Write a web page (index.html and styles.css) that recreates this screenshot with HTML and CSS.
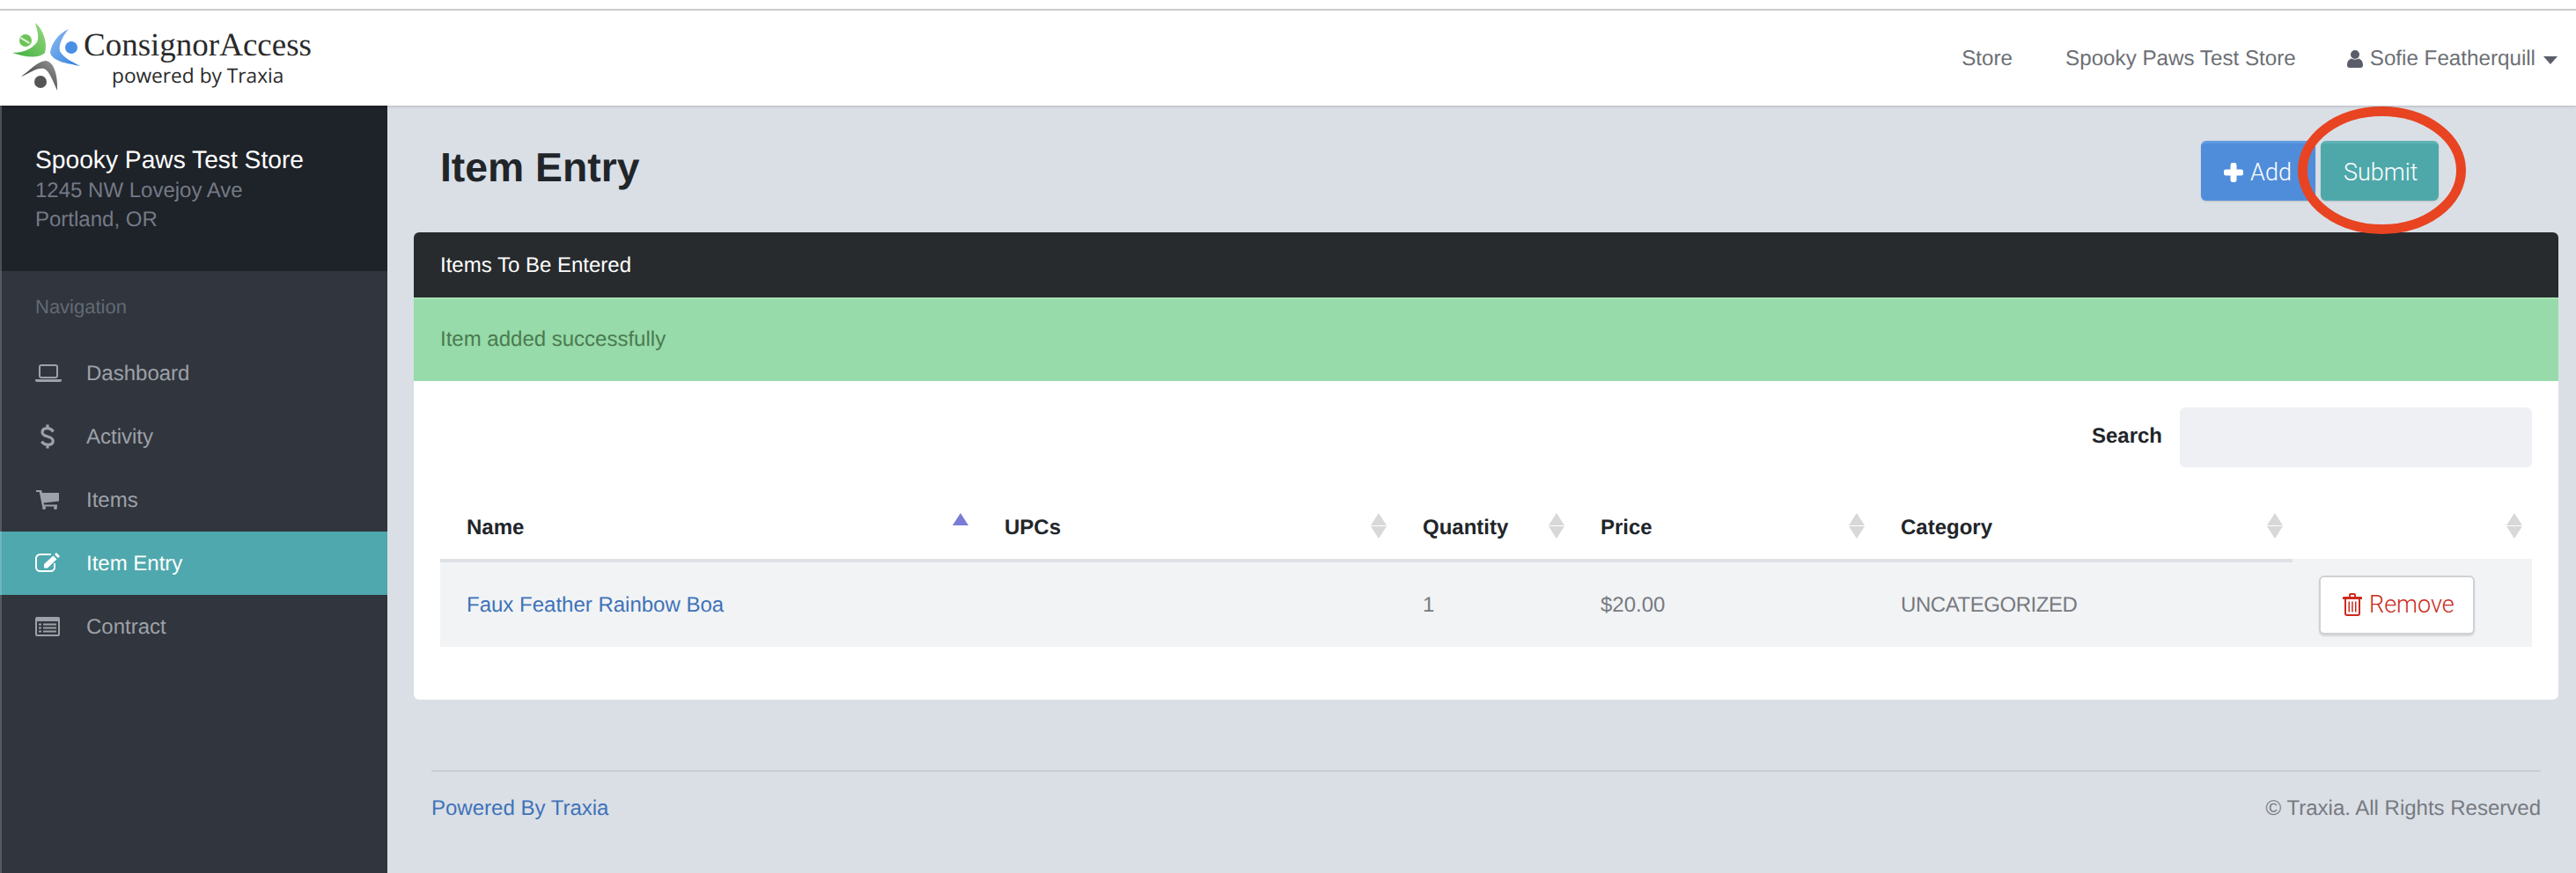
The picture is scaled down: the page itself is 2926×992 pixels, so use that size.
FILE: index.html
```html
<!DOCTYPE html>
<html lang="en">
<head>
<meta charset="utf-8">
<title>Item Entry</title>
<link rel="stylesheet" href="styles.css">
</head>
<body>
<div class="topstrip"></div>
<header class="topbar">
  <a class="logo">
    <svg class="logo-mark" viewBox="0 12 95 108" aria-hidden="true">
      <defs>
        <linearGradient id="lg" x1="0" y1="1" x2="1" y2="0"><stop offset="0" stop-color="#3dae3c"/><stop offset="1" stop-color="#9ad982"/></linearGradient>
        <linearGradient id="lb" x1="0" y1="0" x2="1" y2="1"><stop offset="0" stop-color="#8fbcf0"/><stop offset="1" stop-color="#2f7fe0"/></linearGradient>
        <linearGradient id="ld" x1="0" y1="1" x2="1" y2="0"><stop offset="0" stop-color="#222"/><stop offset="1" stop-color="#9a9a9a"/></linearGradient>
      </defs>
      <path fill="url(#lg)" d="M40 26C50 34 54 50 51 60C44 67 28 65 14 60C26 60 36 56 42 48C45 42 42 34 40 26Z"/>
      <circle fill="#6cc456" cx="29" cy="46" r="7"/>
      <path fill="#d9f0d0" d="M24 42L34 48L33 50L23 44Z"/>
      <path fill="url(#lb)" d="M78 33C66 38 58 50 57 60C60 70 76 72 91 75C82 70 72 66 68 58C66 50 72 40 78 33Z"/>
      <circle fill="#4a8fe6" cx="81" cy="54" r="7"/>
      <path fill="url(#ld)" d="M24 87C34 80 42 70 52 69C62 70 66 88 65 103C60 92 56 80 50 78C42 76 32 84 24 87Z"/>
      <circle fill="#555" cx="46" cy="93" r="7"/>
    </svg>
    <span class="logo-text">
      <span class="logo-name">ConsignorAccess</span>
      <span class="logo-sub">powered by Traxia</span>
    </span>
  </a>
  <nav class="topnav">
    <a>Store</a>
    <a>Spooky Paws Test Store</a>
    <a class="usermenu">
      <svg class="ic-user" viewBox="0 0 18 20"><circle cx="9" cy="5" r="5"/><path d="M0 17C0 11 4 10 5 9.500C7 11 11 11 13 9.500C14 10 18 11 18 17C18 19 17 20 15 20H3C1 20 0 19 0 17Z"/></svg>
      <span>Sofie Featherquill</span>
      <i class="caret"></i>
    </a>
  </nav>
</header>
<div class="layout">
  <aside class="sidebar">
    <div class="store">
      <div class="store-name">Spooky Paws Test Store</div>
      <div class="store-addr">1245 NW Lovejoy Ave</div>
      <div class="store-addr">Portland, OR</div>
    </div>
    <div class="nav-label">Navigation</div>
    <ul class="menu">
      <li class="menu-item">
        <span class="menu-ic"><svg class="ic-laptop" viewBox="0 0 30 20"><rect x="5" y="1" width="20" height="14" rx="2" fill="none" stroke="currentColor" stroke-width="2"/><path fill="currentColor" d="M0 17H30V18A2 2 0 0 1 28 20H2A2 2 0 0 1 0 18Z"/></svg></span>
        Dashboard
      </li>
      <li class="menu-item">
        <span class="menu-ic"><svg class="ic-dollar" viewBox="0 0 16 28"><path fill="none" stroke="currentColor" stroke-width="3.200" d="M14.500 8.500C12.500 5.500 10 4.700 7.800 4.700C4 4.700 2 6.500 2 9.200C2 15.500 14.200 12.500 14.200 19C14.200 21.700 12 23.400 8.500 23.400C5.800 23.400 3.200 22.300 1.300 19.800M8 .5V4M8 24V27.500"/></svg></span>
        Activity
      </li>
      <li class="menu-item">
        <span class="menu-ic"><svg class="ic-cart" viewBox="0 0 26 22"><path fill="currentColor" d="M0 0H6L7 3H26V12.500L8.500 14.500L9 16.500H24V18.500H7L3.800 2H0Z"/><circle fill="currentColor" cx="9" cy="20" r="2"/><circle fill="currentColor" cx="22" cy="20" r="2"/></svg></span>
        Items
      </li>
      <li class="menu-item is-active">
        <span class="menu-ic"><svg class="ic-edit" viewBox="0 0 28 22"><path fill="none" stroke="currentColor" stroke-width="2" d="M18 2H5.500A4.500 4.500 0 0 0 1 6.500V16.500A4.500 4.500 0 0 0 5.500 21H17.500A4.500 4.500 0 0 0 22 16.500V12"/><path fill="currentColor" d="M10 13L20.500 3.500L24.500 7.500L14 17.500H10ZM22 2L24 0L28 4L26 6Z"/></svg></span>
        Item Entry
      </li>
      <li class="menu-item">
        <span class="menu-ic"><svg class="ic-list" viewBox="0 0 28 22"><path fill="currentColor" fill-rule="evenodd" d="M2 0H26A2 2 0 0 1 28 2V20A2 2 0 0 1 26 22H2A2 2 0 0 1 0 20V2A2 2 0 0 1 2 0ZM2 5V19.500A.5.5 0 0 0 2.500 20H25.500A.5.5 0 0 0 26 19.500V5Z"/><path fill="currentColor" d="M4 7.500H7V9.500H4ZM9 7.500H24V9.500H9ZM4 11.500H7V13.500H4ZM9 11.500H24V13.500H9ZM4 15.500H7V17.500H4ZM9 15.500H24V17.500H9Z"/></svg></span>
        Contract
      </li>
    </ul>
  </aside>
  <main class="content">
    <div class="pagehead">
      <h1 class="title">Item Entry</h1>
      <div class="actions">
        <button class="btn btn-add" type="button">
          <svg class="ic-plus" viewBox="0 0 22 22"><path d="M7.500 3A3 3 0 0 1 14.500 3V7.500H19A3.500 3.500 0 0 1 19 14.500H14.500V19A3.500 3.500 0 0 1 7.500 19V14.500H3A3.500 3.500 0 0 1 3 7.500H7.500Z"/></svg>
          Add
        </button>
        <button class="btn btn-submit" type="button">Submit</button>
        <svg class="callout" viewBox="0 0 191 145" aria-hidden="true"><ellipse cx="95.500" cy="72.500" rx="90" ry="67" fill="none" stroke="#e84422" stroke-width="11"/></svg>
      </div>
    </div>
    <section class="panel">
      <div class="panel-head">Items To Be Entered</div>
      <div class="alert">Item added successfully</div>
      <div class="panel-body">
        <div class="search">
          <label class="search-label" for="q">Search</label>
          <input class="search-input" id="q" type="text">
        </div>
        <table class="grid">
          <colgroup>
            <col class="c-name"><col class="c-upc"><col class="c-qty"><col class="c-price"><col class="c-cat"><col class="c-act">
          </colgroup>
          <thead>
            <tr>
              <th class="sorted">Name</th>
              <th class="sort">UPCs</th>
              <th class="sort">Quantity</th>
              <th class="sort">Price</th>
              <th class="sort">Category</th>
              <th class="sort th-act"></th>
            </tr>
          </thead>
          <tbody>
            <tr>
              <td class="td-text"><a class="item-link">Faux Feather Rainbow Boa</a></td>
              <td></td>
              <td class="td-text">1</td>
              <td class="td-text">$20.00</td>
              <td class="td-text td-cat">UNCATEGORIZED</td>
              <td>
                <button class="btn-remove" type="button">
                  <svg class="ic-trash" viewBox="0 0 22 26"><path fill="currentColor" fill-rule="evenodd" d="M7 4V2A2 2 0 0 1 9 0H13A2 2 0 0 1 15 2V4H21A1 1 0 0 1 22 5V7H20V23A3 3 0 0 1 17 26H5A3 3 0 0 1 2 23V7H0V5A1 1 0 0 1 1 4ZM9 4H13V2H9ZM4 7V23A1 1 0 0 0 5 24H17A1 1 0 0 0 18 23V7Z"/><path fill="currentColor" d="M6.500 9.500H8V21.500H6.500ZM10.250 9.500H11.750V21.500H10.250ZM14 9.500H15.500V21.500H14Z"/></svg>
                  Remove
                </button>
              </td>
            </tr>
          </tbody>
        </table>
      </div>
    </section>
    <footer class="foot">
      <a class="foot-link">Powered By Traxia</a>
      <span class="foot-copy">© Traxia. All Rights Reserved</span>
    </footer>
  </main>
</div>
</body>
</html>
```

FILE: styles.css
```css
* { box-sizing: border-box; }
html, body { margin: 0; padding: 0; height: 992px; overflow: hidden; }
body {
  background: #fff;
  color: #212529;
  font-family: "Liberation Sans", Arial, sans-serif;
  font-size: 24px;
  text-rendering: geometricPrecision;
  display: flex;
  flex-direction: column;
}
svg { display: block; }

.topstrip { height: 12px; flex: none; border-bottom: 2px solid #cfcfcf; background: #fff; }

.topbar {
  height: 108px;
  flex: none;
  display: flex;
  align-items: center;
  justify-content: space-between;
  padding-right: 21px;
  background: #fff;
  box-shadow: 0 1px 3px rgba(0, 0, 0, .18);
  position: relative;
  z-index: 2;
}
.logo { display: flex; height: 100%; }
.logo-mark { width: 95px; height: 108px; flex: none; }
.logo-text { display: flex; flex-direction: column; padding-top: 20px; }
.logo-name { font-family: "Liberation Serif", serif; font-size: 37px; line-height: 40px; color: #2a2a2a; }
.logo-sub { font-family: "Open Sans", sans-serif; font-size: 22.700px; line-height: 28px; color: #2a2a2a; padding-left: 32px; }

.topnav { display: flex; align-items: center; gap: 60px; color: #6c6f75; font-size: 24.200px; padding-top: 1px; }
.usermenu { display: flex; align-items: center; margin-left: -2px; }
.ic-user { width: 18px; height: 20px; fill: #5b5e6a; margin-right: 8px; }
.caret {
  width: 0; height: 0; margin-left: 9px; margin-top: 4px;
  border-left: 8px solid transparent;
  border-right: 8px solid transparent;
  border-top: 9px solid #5b5e6a;
}

.layout { flex: 1; display: flex; min-height: 0; }

.sidebar {
  width: 440px;
  flex: none;
  background: #31353d;
  border-left: 2px solid #555a60;
  color: #9da1a8;
}
.store { background: #1e2229; height: 188px; padding: 43px 0 0 38px; margin-left: -2px; border-left: 2px solid #4d5157; }
.store-name { color: #fff; font-size: 28.200px; line-height: 37px; }
.store-addr { color: #747a85; line-height: 33px; }
.nav-label { color: #626a75; font-size: 22px; line-height: 32px; padding: 25px 0 23px 38px; }
.menu { list-style: none; margin: 0; padding: 0; }
.menu-item { height: 72px; display: flex; align-items: center; padding: 2px 0 0 38px; }
.menu-item.is-active { background: #4ea8ad; color: #fff; margin-left: -2px; border-left: 2px solid #6eb9bd; }
.menu-ic { width: 58px; flex: none; display: flex; margin-top: -2px; }
.ic-laptop { width: 30px; height: 20px; }
.ic-dollar { width: 16px; height: 28px; margin-left: 6px; }
.ic-cart { width: 26px; height: 22px; margin-left: 1px; }
.ic-edit { width: 28px; height: 22px; margin-top: -2px; }
.ic-list { width: 28px; height: 22px; }

.content { flex: 1; min-width: 0; background: #dadfe6; padding: 0 20px 0 30px; }

.pagehead { height: 144px; display: flex; justify-content: space-between; align-items: flex-start; padding: 40px 136px 0 30px; }
.title { margin: 0; font-size: 46.300px; line-height: 60px; font-weight: 700; color: #212529; }
.actions { display: flex; gap: 6px; position: relative; }
.btn {
  height: 68px;
  border: 0;
  border-radius: 6px;
  padding: 0 26px;
  color: #fff;
  font-family: Roboto, "Liberation Sans", sans-serif;
  font-weight: 300;
  font-size: 27px;
  display: flex;
  align-items: center;
  box-shadow: 0 1px 2px rgba(0, 0, 0, .15);
}
.btn-add { background: #4f8ddb; border-top: 3px solid #5f9be2; gap: 8px; width: 130px; }
.btn-submit { background: #4ea8aa; border-top: 3px solid #5fb3b5; width: 134px; }
.ic-plus { width: 22px; height: 22px; fill: #fff; flex: none; }
.callout { position: absolute; left: 109.500px; top: -39px; width: 191px; height: 145px; }

.panel { background: #fff; border-radius: 6px; height: 531px; }
.panel-head { height: 74px; line-height: 76px; padding-left: 30px; background: #272b2e; color: #fff; border-radius: 6px 6px 0 0; }
.alert { height: 95px; line-height: 92px; padding-left: 30px; background: #96dba9; border-top: 2px solid #a6e2b6; color: #4b7a50; }
.panel-body { padding: 30px 30px 60px; }

.search { display: flex; justify-content: flex-end; align-items: center; gap: 20px; }
.search-label { font-weight: 700; color: #212529; margin-top: -2px; }
.search-input { width: 400px; height: 68px; border: 0; border-radius: 6px; background: #eef0f3; }

.grid { width: 2376px; table-layout: fixed; border-spacing: 0; border-collapse: separate; margin-top: 34px; }
.c-name { width: 611px; }
.c-upc { width: 475px; }
.c-qty { width: 202px; }
.c-price { width: 341px; }
.c-cat { width: 475px; }
.c-act { width: 272px; }
.grid th {
  height: 74px;
  padding: 0 30px;
  text-align: left;
  font-weight: 700;
  color: #212529;
  border-bottom: 4px solid #dee2e6;
  position: relative;
}
.grid th.th-act { border-bottom-color: #f1f3f5; }
.grid td { height: 96px; padding: 0 30px; background: #f1f3f5; color: #777a80; }
.grid .td-text { padding-top: 2px; }
.sort::before, .sort::after, .sorted::before {
  content: "";
  position: absolute;
  right: 11px;
  width: 0;
  height: 0;
  border-left: 9px solid transparent;
  border-right: 9px solid transparent;
}
.sort::before { top: 18px; border-bottom: 14px solid #d8d8d8; }
.sort::after { top: 33px; border-top: 14px solid #d8d8d8; }
.sorted::before { top: 18px; border-bottom: 14px solid #7b7bd6; }
.item-link { color: #3f72b8; }
.td-cat { letter-spacing: -.45px; }

.btn-remove {
  width: 177px;
  height: 67px;
  display: flex;
  align-items: center;
  gap: 8px;
  padding: 0 0 0 25px;
  background: #fff;
  border: 2px solid #cfd1d4;
  border-radius: 6px;
  box-shadow: 0 2px 2px rgba(0, 0, 0, .12);
  color: #cc2a20;
  font-family: Roboto, "Liberation Sans", sans-serif;
  font-weight: 300;
  font-size: 27px;
}
.ic-trash { width: 22px; height: 26px; flex: none; }

.foot {
  margin: 80px 20px 0;
  border-top: 2px solid #c8cdd2;
  padding-top: 27px;
  display: flex;
  justify-content: space-between;
  line-height: 30px;
}
.foot-link { color: #3f72b8; }
.foot-copy { color: #777a80; }
```
